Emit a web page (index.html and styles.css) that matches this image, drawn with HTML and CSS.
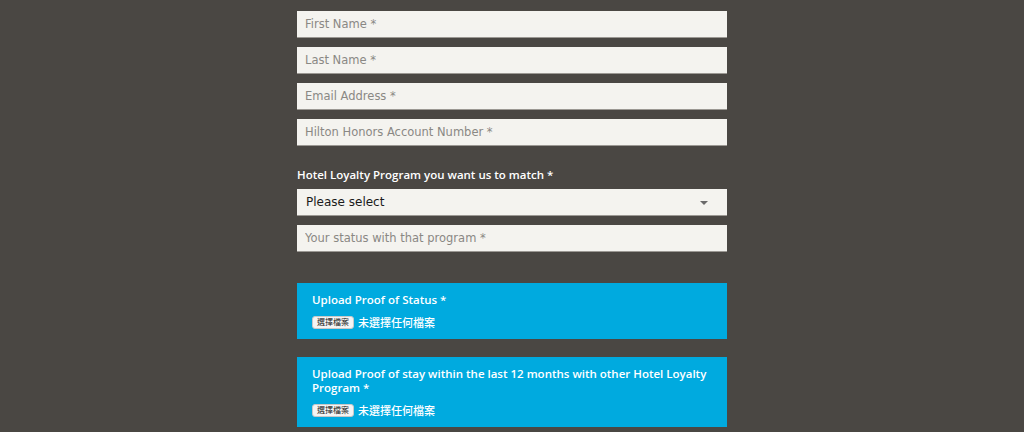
FILE: index.html
```html
<!DOCTYPE html>
<html lang="en">

<head>
    <meta charset="UTF-8">
    <meta name="viewport" content="width=device-width, initial-scale=1.0">
    <title>Status Match</title>
    <link rel="stylesheet" href="styles.css">
</head>

<body>
    <form class="match-form">
        <div class="fields">
            <input type="text" class="field" placeholder="First Name *" />
            <input type="text" class="field" placeholder="Last Name *" />
            <input type="email" class="field" placeholder="Email Address *" />
            <input type="text" class="field" placeholder="Hilton Honors Account Number *" />
        </div>

        <label class="program-label" for="programSelect">Hotel Loyalty Program you want us to match *</label>
        <div class="fields">
            <div class="select-wrap">
                <select id="programSelect" class="field select">
                    <option>Please select</option>
                </select>
            </div>
            <input type="text" class="field" placeholder="Your status with that program *" />
        </div>

        <div class="upload">
            <div class="upload-title">Upload Proof of Status *</div>
            <div class="file-row">
                <span class="file-btn">選擇檔案</span>
                <span class="file-name">未選擇任何檔案</span>
            </div>
        </div>

        <div class="upload">
            <div class="upload-title">Upload Proof of stay within the last 12 months with other Hotel Loyalty Program *</div>
            <div class="file-row">
                <span class="file-btn">選擇檔案</span>
                <span class="file-name">未選擇任何檔案</span>
            </div>
        </div>
    </form>
</body>

</html>
```
FILE: styles.css
```css
/* Dark page, centred form column */
body {
    margin: 0;
    background-color: #4a4743;
    font-family: "DejaVu Sans", "Noto Sans CJK TC", sans-serif;
    overflow: hidden;
}

.match-form {
    width: 430px;
    margin: 11px auto 0;
}

.fields {
    display: flex;
    flex-direction: column;
    gap: 9px;
}

.field {
    box-sizing: border-box;
    width: 100%;
    height: 27px;
    margin: 0;
    padding: 0 8px;
    border: none;
    border-bottom: 1px solid #9b9893;
    border-radius: 0;
    background-color: #f4f3ef;
    font-family: inherit;
    font-size: 11.5px;
    color: #222;
    outline: none;
}

.field::placeholder {
    color: #8a8884;
}

/* Select with a small grey caret */
.select-wrap {
    position: relative;
}

.select {
    -webkit-appearance: none;
    appearance: none;
    padding-left: 9px;
    font-size: 12px;
    color: #1a1a1a;
}

.select-wrap::after {
    content: "";
    position: absolute;
    right: 19px;
    top: 12px;
    border-left: 4px solid transparent;
    border-right: 4px solid transparent;
    border-top: 4px solid #6a6a6a;
    pointer-events: none;
}

.program-label,
.upload-title {
    font-family: "Open Sans", "Noto Sans CJK TC", sans-serif;
    font-weight: 600;
    font-size: 11.5px;
    line-height: 14px;
}

.program-label {
    display: block;
    margin: 22px 0 7px;
    color: #fff;
}

/* Blue upload panels */
.upload {
    margin-top: 31px;
    padding: 10px 10px 10px 15px;
    background-color: #00aadf;
    color: #fff;
}

.upload + .upload {
    margin-top: 18px;
}

.file-row {
    display: flex;
    align-items: center;
    gap: 4px;
    margin-top: 8px;
    height: 14px;
}

.file-btn {
    padding: 1px 4px;
    background-color: #f4f4f4;
    border: 1px solid #c8c8c8;
    border-radius: 3px;
    font-size: 8px;
    line-height: 9px;
    color: #222;
}

.file-name {
    font-family: "Noto Sans CJK TC", sans-serif;
    font-weight: 500;
    font-size: 11px;
    line-height: 14px;
}
```
